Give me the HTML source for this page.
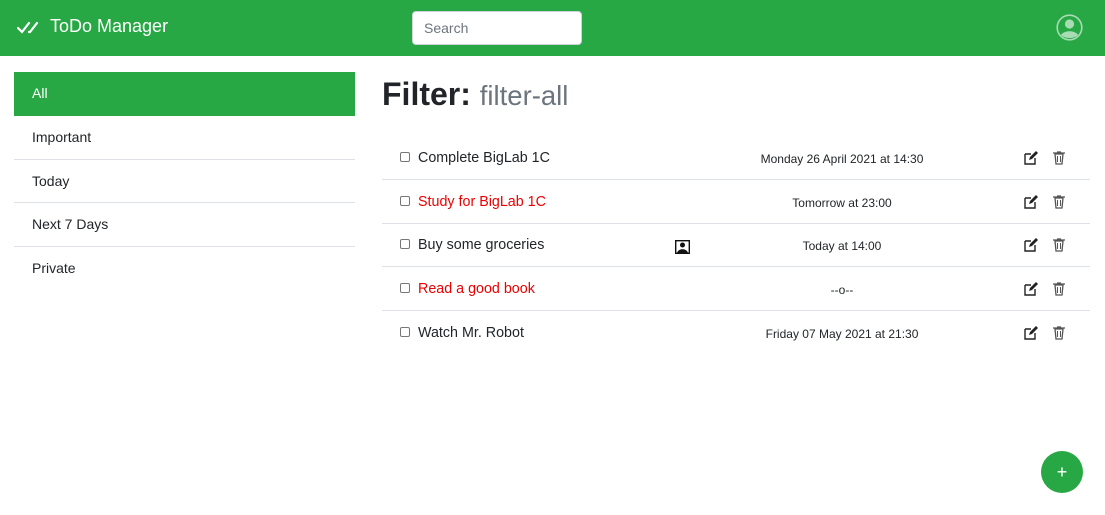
<!DOCTYPE html>
<html><head><meta charset="utf-8"><style>
*{box-sizing:border-box;margin:0;padding:0}
body{width:1105px;height:515px;font-family:"Liberation Sans",sans-serif;color:#212529;background:#fff;position:relative;overflow:hidden;font-size:14px}
.nav{position:absolute;left:0;top:0;width:1105px;height:56px;background:#28a745}
.brand{position:absolute;left:50px;top:16px;color:#fff;font-size:18px}
.search{position:absolute;left:412px;top:11px;width:170px;height:34px;background:#fff;border:1px solid #ced4da;border-radius:4px;color:#6c757d;font-size:14px;padding:8px 11px}
.side{position:absolute;left:14px;top:72px;width:341px}
.side div{height:43.5px;line-height:43.5px;padding-left:18px;font-size:14px;border-bottom:1px solid #dee2e6}
.side .act{background:#28a745;color:#fff;border:none;height:44px}
h1{position:absolute;left:382px;top:76px;font-size:32px;font-weight:bold;white-space:nowrap}
h1 span{font-size:27.5px;color:#6c757d;font-weight:normal}
.row{position:absolute;left:382px;width:708px;height:43.5px;border-bottom:1px solid #dee2e6}
.cb{position:absolute;left:18px;top:16px;width:10px;height:10px;border:1px solid #777;border-radius:2px}
.t{position:absolute;left:36px;top:14px;font-size:14.3px}
.r{color:#e00}
.d{position:absolute;left:340px;width:240px;text-align:center;top:16px;font-size:12px}
.ic{position:absolute;top:15px}
.fab{position:absolute;left:1041px;top:451px;width:42px;height:42px;border-radius:50%;background:#28a745;color:#fff;text-align:center;line-height:42px;font-size:18px}
</style></head><body>
<div class="nav">
<svg style="position:absolute;left:17px;top:21px" width="22" height="14" viewBox="0 0 22 14"><path d="M1 7l4 4 7-9M12 11l1 0 7-9" stroke="#fff" stroke-width="2.2" fill="none" stroke-linecap="round"/></svg>
<div class="brand">ToDo Manager</div>
<div class="search">Search</div>
<svg style="position:absolute;left:1056px;top:14px" width="27" height="27" viewBox="0 0 27 27"><circle cx="13.5" cy="13.5" r="12.3" stroke="#a8dcb4" stroke-width="1.6" fill="none"/><circle cx="13.5" cy="10" r="4.6" fill="#a8dcb4"/><path d="M5 21c3-5 14-5 17 0c-4 4-13 4-17 0z" fill="#a8dcb4"/></svg>
</div>
<div class="side"><div class="act">All</div><div>Important</div><div>Today</div><div>Next 7 Days</div><div style="border:none">Private</div></div>
<h1>Filter: <span>filter-all</span></h1>

<div class="row" style="top:136px"><div class="cb"></div><div class="t">Complete BigLab 1C</div><div class="d">Monday 26 April 2021 at 14:30</div>
<svg class="ic" style="left:642px" width="14" height="14" viewBox="0 0 14 14"><path d="M1 3h6M1 3v10h10V7" stroke="#222" stroke-width="1.4" fill="none"/><path d="M5 9l1-3 6-6 2 2-6 6z" fill="#222"/></svg>
<svg class="ic" style="left:671px" width="12" height="14" viewBox="0 0 12 14"><path d="M0 2h12M4 1h4M2 3h8l-1 10H3z" stroke="#555" stroke-width="1.3" fill="none"/><path d="M4.5 5v6M7.5 5v6" stroke="#555"/></svg></div>

<div class="row" style="top:180px"><div class="cb"></div><div class="t r">Study for BigLab 1C</div><div class="d">Tomorrow at 23:00</div>
<svg class="ic" style="left:642px" width="14" height="14" viewBox="0 0 14 14"><path d="M1 3h6M1 3v10h10V7" stroke="#222" stroke-width="1.4" fill="none"/><path d="M5 9l1-3 6-6 2 2-6 6z" fill="#222"/></svg>
<svg class="ic" style="left:671px" width="12" height="14" viewBox="0 0 12 14"><path d="M0 2h12M4 1h4M2 3h8l-1 10H3z" stroke="#555" stroke-width="1.3" fill="none"/><path d="M4.5 5v6M7.5 5v6" stroke="#555"/></svg></div>

<div class="row" style="top:223px"><div class="cb"></div><div class="t">Buy some groceries</div>
<svg class="ic" style="left:293px;top:17px" width="15" height="14" viewBox="0 0 15 14"><rect x="0.7" y="0.7" width="13.6" height="12.6" fill="none" stroke="#111" stroke-width="1.4"/><circle cx="7.5" cy="5" r="2.5" fill="#111"/><path d="M2 13c1-5 10-5 11 0z" fill="#111"/></svg>
<div class="d">Today at 14:00</div>
<svg class="ic" style="left:642px" width="14" height="14" viewBox="0 0 14 14"><path d="M1 3h6M1 3v10h10V7" stroke="#222" stroke-width="1.4" fill="none"/><path d="M5 9l1-3 6-6 2 2-6 6z" fill="#222"/></svg>
<svg class="ic" style="left:671px" width="12" height="14" viewBox="0 0 12 14"><path d="M0 2h12M4 1h4M2 3h8l-1 10H3z" stroke="#555" stroke-width="1.3" fill="none"/><path d="M4.5 5v6M7.5 5v6" stroke="#555"/></svg></div>

<div class="row" style="top:267px"><div class="cb"></div><div class="t r">Read a good book</div><div class="d">--o--</div>
<svg class="ic" style="left:642px" width="14" height="14" viewBox="0 0 14 14"><path d="M1 3h6M1 3v10h10V7" stroke="#222" stroke-width="1.4" fill="none"/><path d="M5 9l1-3 6-6 2 2-6 6z" fill="#222"/></svg>
<svg class="ic" style="left:671px" width="12" height="14" viewBox="0 0 12 14"><path d="M0 2h12M4 1h4M2 3h8l-1 10H3z" stroke="#555" stroke-width="1.3" fill="none"/><path d="M4.5 5v6M7.5 5v6" stroke="#555"/></svg></div>

<div class="row" style="top:311px;border:none"><div class="cb"></div><div class="t">Watch Mr. Robot</div><div class="d">Friday 07 May 2021 at 21:30</div>
<svg class="ic" style="left:642px" width="14" height="14" viewBox="0 0 14 14"><path d="M1 3h6M1 3v10h10V7" stroke="#222" stroke-width="1.4" fill="none"/><path d="M5 9l1-3 6-6 2 2-6 6z" fill="#222"/></svg>
<svg class="ic" style="left:671px" width="12" height="14" viewBox="0 0 12 14"><path d="M0 2h12M4 1h4M2 3h8l-1 10H3z" stroke="#555" stroke-width="1.3" fill="none"/><path d="M4.5 5v6M7.5 5v6" stroke="#555"/></svg></div>

<div class="fab">+</div>
</body></html>
